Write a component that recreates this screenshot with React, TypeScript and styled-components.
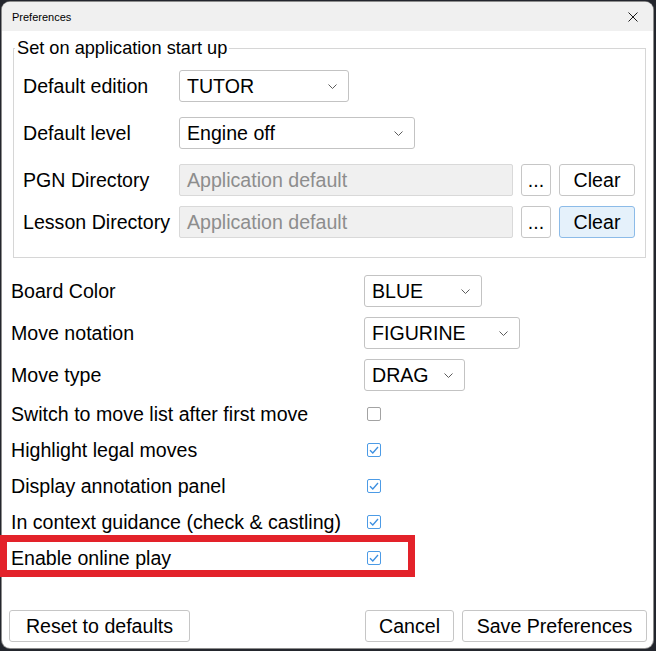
import React from 'react'
import styled, { createGlobalStyle } from 'styled-components'

const FONT = '"Liberation Sans", Arial, sans-serif'

const GlobalStyle = createGlobalStyle`
  html, body {
    margin: 0;
    padding: 0;
  }
  body {
    width: 656px;
    height: 651px;
    overflow: hidden;
    background: #23262d;
    font-family: ${FONT};
    color: #000;
  }
`

type SelectOption = { value: string; width: number }

const STARTUP_SELECTS: { label: string; select: SelectOption }[] = [
  { label: 'Default edition', select: { value: 'TUTOR', width: 170 } },
  { label: 'Default level', select: { value: 'Engine off', width: 236 } },
]

const DIRECTORIES = [
  { label: 'PGN Directory', focused: false },
  { label: 'Lesson Directory', focused: true },
]

const DISPLAY_SELECTS: { label: string; select: SelectOption }[] = [
  { label: 'Board Color', select: { value: 'BLUE', width: 118 } },
  { label: 'Move notation', select: { value: 'FIGURINE', width: 156 } },
  { label: 'Move type', select: { value: 'DRAG', width: 101 } },
]

const TOGGLES = [
  { label: 'Switch to move list after first move', checked: false },
  { label: 'Highlight legal moves', checked: true },
  { label: 'Display annotation panel', checked: true },
  { label: 'In context guidance (check & castling)', checked: true },
  { label: 'Enable online play', checked: true, highlight: true },
]

const Chevron = () => (
  <svg width="9" height="5" viewBox="0 0 9 5" fill="none">
    <path d="M0.5 0.5 L4.5 4.5 L8.5 0.5" stroke="#5c5c5c" strokeWidth="1" />
  </svg>
)

const CloseIcon = () => (
  <svg width="10" height="10" viewBox="0 0 10 10" fill="none">
    <path d="M0.5 0.5 L9.5 9.5 M9.5 0.5 L0.5 9.5" stroke="#1a1a1a" strokeWidth="1" />
  </svg>
)

const CheckIcon = () => (
  <svg width="10" height="8" viewBox="0 0 10 8" fill="none">
    <path d="M1 4.2 L3.8 7 L9 1" stroke="#3b8ee0" strokeWidth="1.3" />
  </svg>
)

const Preferences = () => (
  <Window>
    <TitleBar>
      <Title>Preferences</Title>
      <CloseButton>
        <CloseIcon />
      </CloseButton>
    </TitleBar>
    <Body>
      <Group>
        <Legend>Set on application start up</Legend>
        {STARTUP_SELECTS.map((row, i) => (
          <FormRow key={row.label} $gap={i === 0 ? 0 : 15}>
            <GroupLabel>{row.label}</GroupLabel>
            <Select $width={row.select.width}>
              {row.select.value}
              <Chevron />
            </Select>
          </FormRow>
        ))}
        {DIRECTORIES.map((dir, i) => (
          <FormRow key={dir.label} $gap={i === 0 ? 15 : 10}>
            <GroupLabel>{dir.label}</GroupLabel>
            <PathInput>Application default</PathInput>
            <Button $width={30}>...</Button>
            <Button $width={76} $focused={dir.focused}>
              Clear
            </Button>
          </FormRow>
        ))}
      </Group>

      <Settings>
        {DISPLAY_SELECTS.map((row, i) => (
          <FormRow key={row.label} $gap={i === 0 ? 17 : 10}>
            <SettingLabel>{row.label}</SettingLabel>
            <Select $width={row.select.width}>
              {row.select.value}
              <Chevron />
            </Select>
          </FormRow>
        ))}
        <ToggleList>
          {TOGGLES.map((t) => (
            <ToggleRow key={t.label} $highlight={t.highlight}>
              <SettingLabel>{t.label}</SettingLabel>
              <Checkbox $checked={t.checked}>{t.checked && <CheckIcon />}</Checkbox>
            </ToggleRow>
          ))}
        </ToggleList>
      </Settings>

      <Footer>
        <Button $width={181}>Reset to defaults</Button>
        <FooterActions>
          <Button $width={89}>Cancel</Button>
          <Button $width={185}>Save Preferences</Button>
        </FooterActions>
      </Footer>
    </Body>
  </Window>
)

const Window = styled.div`
  margin: 2px 0 0 2px;
  width: 651px;
  height: 646px;
  border-radius: 8px;
  background: #fff;
  display: flex;
  flex-direction: column;
  box-shadow: 0 0 0 1px #8c8c8c;
`

const TitleBar = styled.div`
  height: 29px;
  flex: none;
  display: flex;
  align-items: center;
  justify-content: space-between;
  padding: 0 15px 0 10px;
  background: #f0f0f0;
  border-radius: 8px 8px 0 0;
`

const Title = styled.span`
  font-size: 11px;
  color: #000;
`

const CloseButton = styled.span`
  display: flex;
  width: 10px;
  height: 10px;
`

const Body = styled.div`
  flex: 1;
  display: flex;
  flex-direction: column;
  padding: 6px 7px 6px 9px;
  font-size: 19.6px;
`

const Group = styled.fieldset`
  margin: 0 0 0 2px;
  padding: 11px 9px 19px 9px;
  min-width: 0;
  border: 1px solid #d6d6d6;
  display: flex;
  flex-direction: column;
`

const Legend = styled.legend`
  margin-left: -8px;
  padding: 0 2px;
  font-size: 18.2px;
  line-height: 22px;
`

const FormRow = styled.div<{ $gap: number }>`
  display: flex;
  align-items: center;
  height: 32px;
  margin-top: ${(p) => p.$gap}px;
`

const GroupLabel = styled.span`
  width: 156px;
  flex: none;
  white-space: nowrap;
`

const SettingLabel = styled.span`
  width: 353px;
  flex: none;
  white-space: nowrap;
`

const Select = styled.div<{ $width: number }>`
  box-sizing: border-box;
  width: ${(p) => p.$width}px;
  height: 32px;
  display: flex;
  align-items: center;
  justify-content: space-between;
  padding: 0 11px 0 7px;
  border: 1px solid #c3c3c3;
  border-radius: 3px;
  background: #fff;
`

const PathInput = styled.div`
  box-sizing: border-box;
  width: 334px;
  height: 32px;
  display: flex;
  align-items: center;
  padding-left: 7px;
  margin-right: 8px;
  border: 1px solid #d9d9d9;
  border-radius: 2px;
  background: #f0f0f0;
  color: #8d8d8d;
`

const Button = styled.button<{ $width: number; $focused?: boolean }>`
  box-sizing: border-box;
  width: ${(p) => p.$width}px;
  height: 32px;
  padding: 0;
  font-family: ${FONT};
  font-size: 19.6px;
  color: #000;
  background: ${(p) => (p.$focused ? '#e5f1fb' : '#fff')};
  border: 1px solid ${(p) => (p.$focused ? '#8cbbe8' : '#c6c6c6')};
  border-radius: 3px;
  & + & {
    margin-left: 8px;
  }
`

const Settings = styled.div`
  display: flex;
  flex-direction: column;
`

const ToggleList = styled.div`
  display: flex;
  flex-direction: column;
  margin-top: 5px;
`

const ToggleRow = styled.div<{ $highlight?: boolean }>`
  position: relative;
  display: flex;
  align-items: center;
  height: 36px;

  ${(p) =>
    p.$highlight &&
    `
    &::after {
      content: '';
      position: absolute;
      left: -11px;
      top: -5px;
      width: 415px;
      height: 42px;
      box-sizing: border-box;
      border: 7px solid #e3222a;
      pointer-events: none;
    }
  `}
`

const Checkbox = styled.span<{ $checked: boolean }>`
  box-sizing: border-box;
  width: 14px;
  height: 14px;
  margin-left: 3px;
  display: flex;
  align-items: center;
  justify-content: center;
  border: 1px solid ${(p) => (p.$checked ? '#4c9be6' : '#a3a3a3')};
  border-radius: 2px;
  background: #fff;
`

const Footer = styled.div`
  margin: auto -1px 0 -2px;
  display: flex;
  justify-content: space-between;
`

const FooterActions = styled.div`
  display: flex;
`

export default function App() {
  return (
    <>
      <GlobalStyle />
      <Preferences />
    </>
  )
}
